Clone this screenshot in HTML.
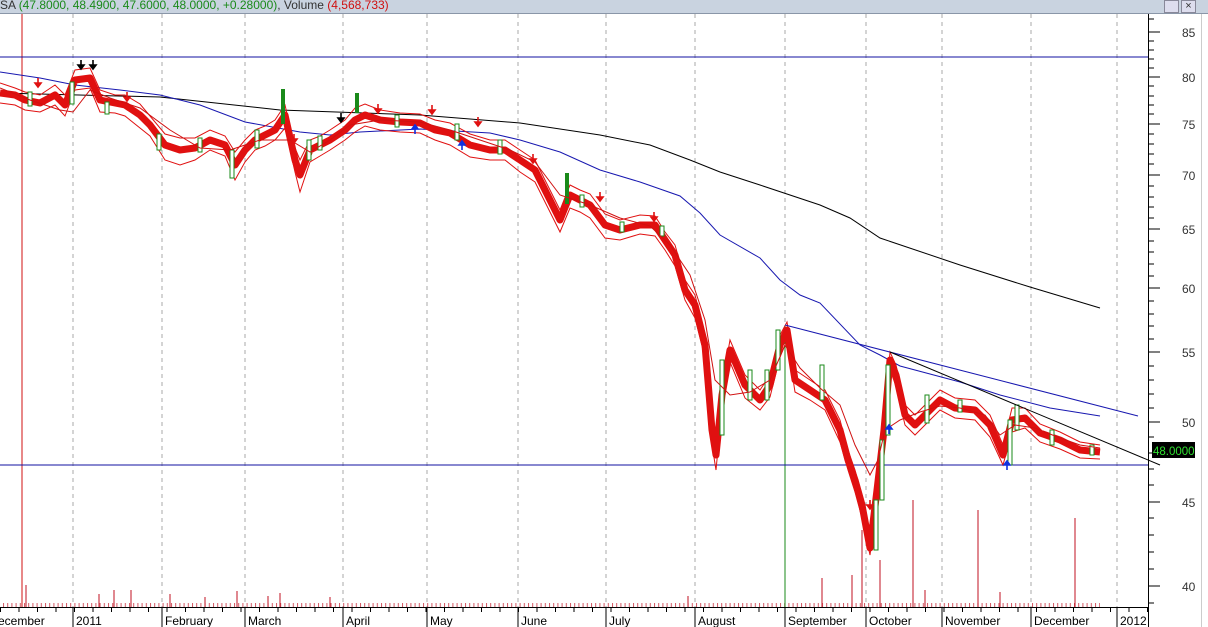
<!DOCTYPE html>
<html><head><meta charset="utf-8"><style>
html,body{margin:0;padding:0;background:#fff;width:1208px;height:627px;overflow:hidden}
#hdr{position:absolute;left:0;top:0;width:1208px;height:13px;background:#c9d3e0;border-bottom:1px solid #8a96a8;font:12px "Liberation Sans",sans-serif;line-height:11px;white-space:nowrap;color:#333}
.g{color:#1a8a1a}.r{color:#d01010}
svg{position:absolute;left:0;top:0}
</style></head><body>
<svg width="1208" height="627" xmlns="http://www.w3.org/2000/svg" font-family="Liberation Sans, sans-serif">
<defs>
<pattern id="vp" x="3" y="0" width="4.2" height="627" patternUnits="userSpaceOnUse"><rect x="0" y="0" width="1" height="627" fill="#c01020"/></pattern>
<pattern id="tp" x="0" y="0" width="18.5" height="627" patternUnits="userSpaceOnUse"><rect x="0" y="0" width="1" height="627" fill="#000"/></pattern>
</defs>
<g stroke="#aaa" stroke-dasharray="4,4">
<line x1="73" y1="14" x2="73" y2="607"/><line x1="162" y1="14" x2="162" y2="607"/><line x1="245" y1="14" x2="245" y2="607"/><line x1="343" y1="14" x2="343" y2="607"/><line x1="427" y1="14" x2="427" y2="607"/><line x1="518" y1="14" x2="518" y2="607"/><line x1="606" y1="14" x2="606" y2="607"/><line x1="695" y1="14" x2="695" y2="607"/><line x1="785" y1="14" x2="785" y2="607"/><line x1="866" y1="14" x2="866" y2="607"/><line x1="942" y1="14" x2="942" y2="607"/><line x1="1031" y1="14" x2="1031" y2="607"/><line x1="1117" y1="14" x2="1117" y2="607"/>
</g>
<!-- volume -->
<rect x="0" y="603" width="1100" height="4" fill="url(#vp)" opacity="0.7"/>
<g stroke="#c01020">
<line x1="22" y1="14" x2="22" y2="607" stroke="#d01010"/><line x1="26" y1="585" x2="26" y2="607"/><line x1="99" y1="594" x2="99" y2="607"/><line x1="114" y1="590" x2="114" y2="607"/><line x1="131" y1="590" x2="131" y2="607"/><line x1="170" y1="594" x2="170" y2="607"/><line x1="205" y1="597" x2="205" y2="607"/><line x1="237" y1="591" x2="237" y2="607"/><line x1="268" y1="596" x2="268" y2="607"/><line x1="280" y1="593" x2="280" y2="607"/><line x1="330" y1="597" x2="330" y2="607"/><line x1="688" y1="596" x2="688" y2="607"/><line x1="822" y1="578" x2="822" y2="607"/><line x1="852" y1="575" x2="852" y2="607"/><line x1="862" y1="530" x2="862" y2="607"/><line x1="880" y1="560" x2="880" y2="607"/><line x1="913" y1="500" x2="913" y2="607"/><line x1="925" y1="590" x2="925" y2="607"/><line x1="978" y1="510" x2="978" y2="607"/><line x1="1000" y1="592" x2="1000" y2="607"/><line x1="1075" y1="518" x2="1075" y2="607"/>
</g>
<line x1="785" y1="325" x2="785" y2="607" stroke="#1a8a1a"/>
<!-- axes -->
<line x1="0" y1="607.5" x2="1148" y2="607.5" stroke="#000"/>
<rect x="0" y="607" width="1148" height="5" fill="url(#tp)"/>
<g stroke="#000"><line x1="73" y1="607" x2="73" y2="627"/><line x1="162" y1="607" x2="162" y2="627"/><line x1="245" y1="607" x2="245" y2="627"/><line x1="343" y1="607" x2="343" y2="627"/><line x1="427" y1="607" x2="427" y2="627"/><line x1="518" y1="607" x2="518" y2="627"/><line x1="606" y1="607" x2="606" y2="627"/><line x1="695" y1="607" x2="695" y2="627"/><line x1="785" y1="607" x2="785" y2="627"/><line x1="866" y1="607" x2="866" y2="627"/><line x1="942" y1="607" x2="942" y2="627"/><line x1="1031" y1="607" x2="1031" y2="627"/><line x1="1117" y1="607" x2="1117" y2="627"/></g>
<g font-size="12" fill="#000"><text x="-2" y="625">ecember</text><text x="76" y="625">2011</text><text x="165" y="625">February</text><text x="248" y="625">March</text><text x="346" y="625">April</text><text x="430" y="625">May</text><text x="521" y="625">June</text><text x="609" y="625">July</text><text x="698" y="625">August</text><text x="788" y="625">September</text><text x="869" y="625">October</text><text x="945" y="625">November</text><text x="1034" y="625">December</text><text x="1120" y="625">2012</text></g>
<line x1="1148.5" y1="14" x2="1148.5" y2="627" stroke="#000"/>
<line x1="1201.5" y1="14" x2="1201.5" y2="627" stroke="#ccc"/>
<g stroke="#000">
<line x1="1148" y1="32" x2="1160" y2="32"/><line x1="1148" y1="77" x2="1160" y2="77"/><line x1="1148" y1="124" x2="1160" y2="124"/><line x1="1148" y1="175" x2="1160" y2="175"/><line x1="1148" y1="229" x2="1160" y2="229"/><line x1="1148" y1="288" x2="1160" y2="288"/><line x1="1148" y1="352" x2="1160" y2="352"/><line x1="1148" y1="422" x2="1160" y2="422"/><line x1="1148" y1="502" x2="1160" y2="502"/><line x1="1148" y1="586" x2="1160" y2="586"/>
<path d="M1148 19h6M1148 41h6M1148 50h6M1148 59h6M1148 68h6M1148 86h6M1148 96h6M1148 105h6M1148 114h6M1148 134h6M1148 144h6M1148 154h6M1148 164h6M1148 186h6M1148 197h6M1148 207h6M1148 218h6M1148 241h6M1148 252h6M1148 264h6M1148 276h6M1148 301h6M1148 314h6M1148 326h6M1148 339h6M1148 366h6M1148 380h6M1148 394h6M1148 408h6M1148 437h6M1148 453h6M1148 469h6M1148 485h6M1148 518h6M1148 535h6M1148 552h6M1148 569h6M1148 603h6"/>
</g>
<g font-size="12" fill="#333"><text x="1182" y="37">85</text><text x="1182" y="82">80</text><text x="1182" y="129">75</text><text x="1182" y="180">70</text><text x="1182" y="234">65</text><text x="1182" y="293">60</text><text x="1182" y="357">55</text><text x="1182" y="427">50</text><text x="1182" y="507">45</text><text x="1182" y="591">40</text></g>
<line x1="0" y1="57" x2="1148" y2="57" stroke="#1010a0"/>
<line x1="0" y1="465" x2="1148" y2="465" stroke="#1010a0"/>
<!-- MAs -->
<polyline fill="none" stroke="#000" points="0,93 160,97 280,110 420,115 520,123 600,135 650,145 690,160 720,172 760,185 820,205 850,218 880,238 960,265 1030,287 1100,308"/>
<polyline fill="none" stroke="#1818b0" points="0,72 40,78 75,85 120,90 160,95 200,105 245,122 300,132 330,135 360,132 420,129 490,133 520,140 560,152 600,170 640,182 680,196 700,213 720,235 760,258 780,280 800,295 820,303 860,345 880,355 900,366 960,382 1000,395 1050,408 1100,416"/>
<!-- price band -->
<polyline fill="none" stroke="#e01010" stroke-width="1" points="0,83 15,88 25,92 40,95 55,85 65,95 75,70 90,68 100,90 115,95 125,95 140,104 150,116 165,134 180,138 195,138 210,130 225,136 235,152 245,140 255,130 265,126 275,120 285,105 295,148 300,160 310,140 320,136 330,130 345,120 355,108 365,104 380,110 400,113 420,114 435,120 450,123 470,134 490,140 505,140 520,150 535,160 550,190 560,210 570,185 580,190 590,194 605,214 620,220 640,215 655,216 665,232 675,245 685,280 695,295 705,335 712,420 716,445 722,385 730,340 745,375 760,390 770,375 780,335 787,322 795,370 810,380 825,390 840,420 848,450 855,470 862,495 870,536 877,480 884,420 890,352 896,365 905,405 915,415 930,400 940,390 955,398 975,400 990,415 1003,445 1012,408 1025,408 1040,424 1060,432 1080,442 1100,445"/>
<polyline fill="none" stroke="#e01010" stroke-width="1" points="0,103 15,105 25,110 40,112 55,105 65,116 75,90 90,88 100,112 115,113 125,116 140,128 150,136 165,160 180,165 195,160 210,150 225,156 235,180 245,162 255,150 265,146 275,140 285,128 295,172 300,192 310,162 320,156 330,150 345,140 355,132 365,126 380,130 400,132 420,133 435,140 450,145 470,157 490,160 505,160 520,172 535,182 550,212 560,232 570,208 580,212 590,218 605,238 620,240 640,234 655,236 665,250 675,266 685,300 695,318 705,358 712,445 716,470 722,408 730,362 745,398 760,410 770,397 780,357 787,340 795,392 810,400 825,410 840,442 848,470 855,492 862,518 870,555 877,502 884,442 890,370 896,386 905,425 915,435 930,420 940,410 955,418 975,420 990,437 1003,465 1012,432 1025,428 1040,442 1060,449 1080,458 1100,459"/>
<polyline fill="none" stroke="#e01010" stroke-width="7" stroke-linejoin="round" points="0,93 15,95 25,100 40,103 55,95 65,105 75,80 90,78 100,100 115,103 125,105 140,115 150,125 165,145 180,150 195,148 210,140 225,145 235,165 245,150 255,140 265,135 275,130 285,115 295,160 300,175 310,150 320,145 330,140 345,130 355,120 365,115 380,120 400,122 420,123 435,130 450,133 470,145 490,150 505,150 520,160 535,170 550,200 560,220 570,195 580,200 590,205 605,225 620,230 640,225 655,225 665,240 675,255 685,290 695,305 705,345 712,430 716,455 722,395 730,350 745,385 760,400 770,385 780,345 787,330 795,380 810,390 825,400 840,430 848,460 855,480 862,505 870,548 877,490 884,430 890,360 896,375 905,415 915,425 930,410 940,400 955,408 975,410 990,425 1003,455 1012,420 1025,418 1040,433 1060,440 1080,450 1100,452"/>
<!-- green candles -->
<g stroke="#1a8a1a" fill="#fff" stroke-width="1">
<rect x="28" y="92" width="4" height="14"/><rect x="70" y="82" width="4" height="22"/><rect x="105" y="102" width="4" height="12"/><rect x="157" y="134" width="4" height="16"/><rect x="198" y="138" width="4" height="14"/><rect x="230" y="150" width="4" height="28"/><rect x="255" y="130" width="4" height="18"/><rect x="307" y="140" width="4" height="20"/><rect x="318" y="136" width="4" height="14"/><rect x="395" y="115" width="4" height="12"/><rect x="455" y="124" width="4" height="16"/><rect x="498" y="140" width="4" height="14"/><rect x="580" y="195" width="4" height="12"/><rect x="620" y="222" width="4" height="10"/><rect x="660" y="226" width="4" height="10"/><rect x="720" y="360" width="4" height="75"/><rect x="748" y="370" width="4" height="30"/><rect x="765" y="370" width="4" height="30"/><rect x="776" y="330" width="4" height="40"/><rect x="820" y="365" width="4" height="35"/><rect x="874" y="500" width="4" height="50"/><rect x="880" y="440" width="4" height="60"/><rect x="886" y="365" width="4" height="70"/><rect x="925" y="395" width="4" height="28"/><rect x="958" y="400" width="4" height="12"/><rect x="1008" y="420" width="4" height="45"/><rect x="1015" y="405" width="4" height="25"/><rect x="1050" y="430" width="4" height="15"/><rect x="1090" y="445" width="4" height="10"/>
</g>
<g fill="#1a8a1a"><rect x="281" y="89" width="4" height="35"/><rect x="355" y="93" width="4" height="20"/><rect x="565" y="173" width="4" height="31"/></g>
<!-- 10-day MA -->
<polyline fill="none" stroke="#d01010" points="0,88 30,100 60,110 73,112 90,90 110,98 140,108 170,130 200,148 230,150 260,140 290,140 310,152 330,140 350,125 380,120 420,122 450,130 480,140 510,150 535,162 560,195 590,205 620,218 650,226 670,245 690,275 705,320 715,380 730,395 750,392 770,380 785,345 800,368 820,388 840,405 855,445 870,475 878,460 885,430 900,420 920,412 940,406 960,408 985,415 1000,435 1015,425 1035,428 1060,438 1080,445 1100,448"/>
<line x1="785" y1="325" x2="1138" y2="416" stroke="#1818b0"/>
<line x1="890" y1="352" x2="1160" y2="465" stroke="#000"/>
<!-- arrows -->
<g stroke-width="1.6">
<path d="M81,60v6M78,65l3,4l3,-4z" stroke="#000" fill="#000"/><path d="M93,60v6M90,65l3,4l3,-4z" stroke="#000" fill="#000"/><path d="M341,113v6M338,118l3,4l3,-4z" stroke="#000" fill="#000"/>
<g stroke="#e01010" fill="#e01010">
<path d="M38,78v6M35,83l3,4l3,-4z"/><path d="M127,92v6M124,97l3,4l3,-4z"/><path d="M294,134v6M291,139l3,4l3,-4z"/><path d="M378,104v6M375,109l3,4l3,-4z"/><path d="M432,105v6M429,110l3,4l3,-4z"/><path d="M478,117v6M475,122l3,4l3,-4z"/><path d="M533,154v6M530,159l3,4l3,-4z"/><path d="M600,192v6M597,197l3,4l3,-4z"/><path d="M654,212v6M651,217l3,4l3,-4z"/><path d="M870,500v6M867,505l3,4l3,-4z"/>
</g>
<g stroke="#1030e0" fill="#1030e0">
<path d="M415,134v-6M412,129l3,-4l3,4z"/><path d="M462,150v-6M459,145l3,-4l3,4z"/><path d="M889,434v-6M886,429l3,-4l3,4z"/><path d="M1007,470v-6M1004,465l3,-4l3,4z"/>
</g>
</g>
<rect x="1152" y="442" width="43" height="16" fill="#000"/>
<text x="1153" y="455" font-size="11.5" fill="#30e030">48.0000</text>
</svg>
<div id="hdr">SA <span class="g">(47.8000, 48.4900, 47.6000, 48.0000, +0.28000)</span>, Volume <span class="r">(4,568,733)</span>
<span style="position:absolute;left:1164px;top:0;width:13px;height:11px;border:1px solid #889;background:#dde"></span><span style="position:absolute;left:1181px;top:0;width:13px;height:11px;border:1px solid #889;background:#dde;text-align:center;font-size:11px">×</span></div>
</body></html>
